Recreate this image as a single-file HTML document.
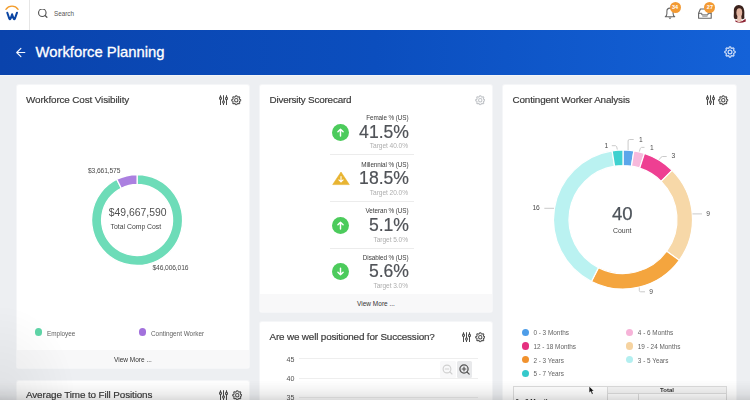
<!DOCTYPE html>
<html><head><meta charset="utf-8">
<style>
*{margin:0;padding:0;box-sizing:border-box}
html,body{width:750px;height:400px;overflow:hidden}
body{background:#edeff2;font-family:"Liberation Sans",sans-serif;position:relative;color:#333}
.a{position:absolute;white-space:nowrap}
.top{position:absolute;left:0;top:0;width:750px;height:30px;background:#fff}
.hdr{position:absolute;left:0;top:30px;width:750px;height:44.6px;background:linear-gradient(90deg,#0a43ac 0%,#0b4ebe 50%,#1462d8 100%)}
.card{position:absolute;background:#fff;border-radius:2px;overflow:hidden;box-shadow:0 0 0 1px rgba(255,255,255,0.45)}
.ttl{position:absolute;font-size:9.9px;letter-spacing:-0.12px;color:#3a3a3a;white-space:nowrap;line-height:12px;margin-top:-0.4px;-webkit-text-stroke:0.18px #3a3a3a}
.foot{position:absolute;left:0;right:0;bottom:0;height:18.2px;background:#f8f8f9;font-size:6.5px;color:#333;text-align:center;line-height:18px;padding-top:1.2px}
.lg{position:absolute;font-size:6.4px;color:#636363;white-space:nowrap;line-height:8px}
.dot{position:absolute;width:7.4px;height:7.4px;border-radius:50%}
.sm{position:absolute;font-size:6.7px;letter-spacing:-0.12px;margin-top:0.3px;color:#4a4a4a;white-space:nowrap;line-height:8px}
.lab{position:absolute;font-size:6.35px;letter-spacing:-0.08px;margin-top:0.2px;color:#3d3d3d;white-space:nowrap;line-height:8px;text-align:right}
.big{position:absolute;font-size:17.6px;color:#505358;-webkit-text-stroke:0.2px #505358;white-space:nowrap;line-height:20px;text-align:right}
.tgt{position:absolute;font-size:6.6px;letter-spacing:-0.06px;margin-top:1px;color:#aeaeae;white-space:nowrap;line-height:8px;text-align:right}
.sep{position:absolute;height:1px;background:#ececec}
.icn{position:absolute}
</style></head><body><div id="wrap" style="position:absolute;left:0;top:0;width:750px;height:400px;filter:blur(0.45px)">
<svg width="0" height="0" style="position:absolute">
  <defs>
    <symbol id="filt" viewBox="0 0 10 10">
      <g fill="none" stroke="#4a4a4a" stroke-width="1.05">
        <path d="M1.5 0.3V9.9M4.5 0.3V9.9M7.5 0.3V9.9"/>
      </g>
      <g fill="#4a4a4a">
        <ellipse cx="1.5" cy="3.2" rx="1.45" ry="1.9"/>
        <ellipse cx="4.5" cy="7" rx="1.45" ry="1.8"/>
        <ellipse cx="7.5" cy="3.4" rx="1.45" ry="1.9"/>
      </g>
      <g fill="#fff">
        <circle cx="1.5" cy="3.2" r="0.5"/>
        <circle cx="4.5" cy="7" r="0.5"/>
        <circle cx="7.5" cy="3.4" r="0.5"/>
      </g>
    </symbol>
    <symbol id="gear" viewBox="0 0 10 10">
      <path d="M4.52 0.12 L5.48 0.12 L6.10 1.36 L6.79 1.65 L8.11 1.21 L8.79 1.89 L8.35 3.21 L8.64 3.90 L9.88 4.52 L9.88 5.48 L8.64 6.10 L8.35 6.79 L8.79 8.11 L8.11 8.79 L6.79 8.35 L6.10 8.64 L5.48 9.88 L4.52 9.88 L3.90 8.64 L3.21 8.35 L1.89 8.79 L1.21 8.11 L1.65 6.79 L1.36 6.10 L0.12 5.48 L0.12 4.52 L1.36 3.90 L1.65 3.21 L1.21 1.89 L1.89 1.21 L3.21 1.65 L3.90 1.36Z" fill="none" stroke="currentColor" stroke-width="1.15" stroke-linejoin="round" transform="translate(0.55 0.55) scale(0.89)"/>
      <circle cx="5" cy="5" r="1.6" fill="none" stroke="currentColor" stroke-width="1"/>
    </symbol>
  </defs>
</svg>

<div class="top">
  <svg class="a" style="left:0;top:0" width="30" height="30" viewBox="0 0 30 30">
    <path d="M5.9 9.3 A7.5 7.5 0 0 1 18.1 9.3" fill="none" stroke="#f39c2a" stroke-width="1.4" stroke-linecap="round"/>
    <path d="M7.3 12.7 L9.3 18.6 Q9.9 20 10.6 18.6 L12.1 14.3 L13.6 18.6 Q14.3 20 14.9 18.6 L17 12.7" fill="none" stroke="#0b46a4" stroke-width="2" stroke-linejoin="round" stroke-linecap="round"/>
  </svg>
  <div class="a" style="left:28.5px;top:0;width:1.2px;height:30px;background:#e6e6e6"></div>
  <svg class="a" style="left:37px;top:9px" width="12" height="10" viewBox="0 0 12 10">
    <circle cx="5.3" cy="3.7" r="3.75" fill="none" stroke="#555" stroke-width="1.15"/>
    <path d="M8.1 6.5 L9.9 8.3" stroke="#555" stroke-width="1.25" stroke-linecap="round"/>
  </svg>
  <div class="a" style="left:54px;top:9.5px;font-size:6.3px;color:#555;line-height:8px">Search</div>
  <svg class="a" style="left:663px;top:6px" width="15" height="15" viewBox="0 0 15 15">
    <path d="M2.3 10.8 Q3.9 9.9 3.9 7.6 L3.9 5.2 A3.1 3.1 0 0 1 10.1 5.2 L10.1 7.6 Q10.1 9.9 11.7 10.8 Z" fill="none" stroke="#666" stroke-width="1.1" stroke-linejoin="round"/>
    <path d="M5.4 11.4 L8.6 11.4 L7 13.2 Z" fill="#666"/>
  </svg>
  <div class="a" style="left:669.6px;top:2.4px;width:11px;height:11px;border-radius:50%;background:#f39a33;color:#fff;font-size:5.5px;font-weight:bold;text-align:center;line-height:11px">34</div>
  <svg class="a" style="left:697px;top:7px" width="16" height="14" viewBox="0 0 16 14">
    <path d="M1.6 6.3 L3.4 2 L12.4 2 L14.2 6.3 V11.3 H1.6Z" fill="none" stroke="#666" stroke-width="1.1" stroke-linejoin="round"/>
    <path d="M1.6 6.3 H4.8 V7.9 H11 V6.3 H14.2" fill="none" stroke="#666" stroke-width="1"/>
    <rect x="5.3" y="8.4" width="5.2" height="1.5" fill="#aaa"/>
  </svg>
  <div class="a" style="left:704.4px;top:2.4px;width:11px;height:11px;border-radius:50%;background:#f39a33;color:#fff;font-size:5.5px;font-weight:bold;text-align:center;line-height:11px">27</div>
  <svg class="a" style="left:728px;top:2px" width="22" height="24" viewBox="0 0 22 24">
    <defs><filter id="bl" x="-20%" y="-20%" width="140%" height="140%"><feGaussianBlur stdDeviation="0.35"/></filter></defs>
    <g filter="url(#bl)">
    <path d="M10.8 3 C7.3 3.1 5.6 5.8 5.9 9.6 C6 12.6 5.3 14.9 6.2 16.6 C7.2 17.8 8.8 17.3 9.6 16.8 L12.8 16.8 C14.3 17.4 16.2 17.6 16.4 15.8 C16.1 13.4 16.6 11 16.2 8.5 C15.8 5.1 14.1 3 10.8 3Z" fill="#3a221c"/>
    <ellipse cx="11.3" cy="10.6" rx="2.9" ry="4.3" fill="#e2b4a0"/>
    <path d="M9.5 13.8 L13.3 13.8 L13.8 19.8 L8.9 19.8Z" fill="#e9c3b2"/>
    <path d="M7.6 18 Q9.5 19.8 11 20.2 Q14 19.8 17.6 16.8 L17.8 19.6 Q12 22 7.4 19.8Z" fill="#8d2233"/>
    </g>
  </svg>
</div>

<div class="a" style="left:0;top:74.6px;width:750px;height:1.6px;background:#f3f5f8"></div>
<div class="hdr">
  <svg class="a" style="left:15px;top:16.9px" width="11" height="11" viewBox="0 0 11 11"><path d="M9.8 5.5 L1.8 5.5 M5.9 1.3 L1.7 5.5 L5.9 9.7" fill="none" stroke="#f2f6ff" stroke-width="1.15" stroke-linecap="round" stroke-linejoin="round"/></svg>
  <div class="a" style="left:35.6px;top:13.4px;font-size:14.8px;color:#fff;line-height:18px;-webkit-text-stroke:0.3px #fff">Workforce Planning</div>
  <svg class="a" style="left:724.3px;top:15.5px;color:#dfe9fb;opacity:0.9" width="12" height="12"><use href="#gear" width="12" height="12"/></svg>
</div>

<!-- Card 1 -->
<div class="card" style="left:16.5px;top:85px;width:232.8px;height:282.8px">
  <div class="ttl" style="left:9.5px;top:9px">Workforce Cost Visibility</div>
  <svg class="icn" style="left:202.5px;top:10px" width="10" height="10"><use href="#filt" width="10" height="10"/></svg>
  <svg class="icn" style="left:214.5px;top:10px;color:#555" width="10.5" height="10.5"><use href="#gear" width="10.5" height="10.5"/></svg>
  <svg class="icn" style="left:0;top:0" width="232" height="282" viewBox="16.5 85 232 282">
    <g stroke="#fff" stroke-width="1.3">
      <path fill="#6ddcb8" d="M136.60 174.50A45.5 45.5 0 1 1 116.30 179.28L120.76 188.23A35.5 35.5 0 1 0 136.60 184.50Z"/>
      <path fill="#ab80e0" d="M116.30 179.28A45.5 45.5 0 0 1 136.60 174.50L136.60 184.50A35.5 35.5 0 0 0 120.76 188.23Z"/>
    </g>
  </svg>
  <div class="sm" style="left:71.5px;top:82px">$3,661,575</div>
  <div class="sm" style="left:136px;top:179px">$46,006,016</div>
  <div class="a" style="left:92.3px;top:121px;font-size:10.4px;color:#505050;line-height:14px">$49,667,590</div>
  <div class="a" style="left:94.1px;top:137px;font-size:6.85px;color:#444;line-height:9px">Total Comp Cost</div>
  <div class="dot" style="left:18.5px;top:243.4px;background:#5fd5a8"></div>
  <div class="lg" style="left:30.5px;top:244.6px">Employee</div>
  <div class="dot" style="left:122px;top:243.4px;background:#a271dc"></div>
  <div class="lg" style="left:134.5px;top:244.6px">Contingent Worker</div>
  <div class="foot">View More ...</div>
</div>

<!-- Card 2 -->
<div class="card" style="left:260px;top:85px;width:232px;height:227px">
  <div class="ttl" style="left:9.5px;top:9px;letter-spacing:-0.2px">Diversity Scorecard</div>
  <svg class="icn" style="left:214.5px;top:10.3px;color:#c2c5c9" width="10.5" height="10.5"><use href="#gear" width="10.5" height="10.5"/></svg>
  <!-- rows -->
  <div class="lab" style="right:83.5px;top:29px">Female % (US)</div>
  <div class="big" style="right:83px;top:36.6px">41.5%</div>
  <div class="tgt" style="right:84px;top:56px">Target 40.0%</div>
  <svg class="icn" style="left:71.5px;top:39px" width="17" height="17" viewBox="0 0 17 17"><circle cx="8.5" cy="8.5" r="8.5" fill="#4ccb5c"/><path d="M8.5 11.9V5.2M5.9 7.8 L8.5 5.2 L11.1 7.8" fill="none" stroke="#fff" stroke-width="1.45" stroke-linecap="round" stroke-linejoin="round"/></svg>
  <div class="sep" style="left:70px;top:69px;width:84px"></div>

  <div class="lab" style="right:83.5px;top:75.5px">Millennial % (US)</div>
  <div class="big" style="right:83px;top:83.1px">18.5%</div>
  <div class="tgt" style="right:84px;top:103px">Target 20.0%</div>
  <svg class="icn" style="left:71.5px;top:86.4px" width="18" height="15" viewBox="0 0 18 15"><path d="M9 1 L17.3 13.6 L0.7 13.6Z" fill="#e8b431" stroke="#e8b431" stroke-width="0.6" stroke-linejoin="round"/><path d="M9 5.6V10.9M6.9 8.8 L9 10.9 L11.1 8.8" fill="none" stroke="#fff" stroke-width="1.1" stroke-linecap="round" stroke-linejoin="round"/></svg>
  <div class="sep" style="left:70px;top:116px;width:84px"></div>

  <div class="lab" style="right:83.5px;top:122px">Veteran % (US)</div>
  <div class="big" style="right:83px;top:129.8px">5.1%</div>
  <div class="tgt" style="right:84px;top:149.5px">Target 5.0%</div>
  <svg class="icn" style="left:72px;top:132px" width="17" height="17" viewBox="0 0 17 17"><circle cx="8.5" cy="8.5" r="8.5" fill="#4ccb5c"/><path d="M8.5 11.9V5.2M5.9 7.8 L8.5 5.2 L11.1 7.8" fill="none" stroke="#fff" stroke-width="1.45" stroke-linecap="round" stroke-linejoin="round"/></svg>
  <div class="sep" style="left:70px;top:162.5px;width:84px"></div>

  <div class="lab" style="right:83.5px;top:168.5px">Disabled % (US)</div>
  <div class="big" style="right:83px;top:176.4px">5.6%</div>
  <div class="tgt" style="right:84px;top:196px">Target 3.0%</div>
  <svg class="icn" style="left:72px;top:178px" width="17" height="17" viewBox="0 0 17 17"><circle cx="8.5" cy="8.5" r="8.5" fill="#4ccb5c"/><path d="M8.5 5.1V11.8M5.9 9.2 L8.5 11.8 L11.1 9.2" fill="none" stroke="#fff" stroke-width="1.45" stroke-linecap="round" stroke-linejoin="round"/></svg>
  <div class="foot">View More ...</div>
</div>

<!-- Card 3 -->
<div class="card" style="left:260px;top:322px;width:232px;height:100px">
  <div class="ttl" style="left:9.5px;top:9px;letter-spacing:-0.16px">Are we well positioned for Succession?</div>
  <svg class="icn" style="left:202px;top:10px" width="10" height="10"><use href="#filt" width="10" height="10"/></svg>
  <svg class="icn" style="left:214.5px;top:10px;color:#555" width="10.5" height="10.5"><use href="#gear" width="10.5" height="10.5"/></svg>
  <div class="sm" style="left:26.6px;top:33.4px;font-size:7.1px;color:#505050">45</div>
  <div class="sm" style="left:26.6px;top:52.4px;font-size:7.1px;color:#505050">40</div>
  <div class="sm" style="left:26.6px;top:71.4px;font-size:7.1px;color:#505050">35</div>
  <div class="sep" style="left:39px;top:36.4px;width:179px;background:#eee"></div>
  <div class="sep" style="left:39px;top:56px;width:179px;background:#eee"></div>
  <div class="sep" style="left:39px;top:75px;width:179px;background:#eee"></div>
  <div class="a" style="left:179.5px;top:39.4px;width:16px;height:16.6px;background:#f8f8f9;border-radius:1.5px"></div>
  <svg class="icn" style="left:181px;top:41px" width="14" height="14" viewBox="0 0 14 14"><circle cx="6" cy="6" r="3.9" fill="none" stroke="#cfcfcf" stroke-width="1.1"/><path d="M8.9 8.9L11 11M4.3 6H7.7" stroke="#cfcfcf" stroke-width="1.1" stroke-linecap="round"/></svg>
  <div class="a" style="left:196.8px;top:39.4px;width:15.6px;height:16.6px;background:#e8e9eb;border-radius:1.5px"></div>
  <svg class="icn" style="left:198px;top:41px" width="14" height="14" viewBox="0 0 14 14"><circle cx="6" cy="6" r="4.1" fill="none" stroke="#555" stroke-width="1.3"/><path d="M9 9L11.2 11.2M4.2 6H7.8M6 4.2V7.8" stroke="#555" stroke-width="1.2" stroke-linecap="round"/></svg>
</div>

<!-- Card 4 -->
<div class="card" style="left:503px;top:85px;width:232.8px;height:330px">
  <div class="ttl" style="left:9.5px;top:9px;letter-spacing:-0.15px">Contingent Worker Analysis</div>
  <svg class="icn" style="left:203px;top:10px" width="10" height="10"><use href="#filt" width="10" height="10"/></svg>
  <svg class="icn" style="left:215px;top:10px;color:#555" width="10.5" height="10.5"><use href="#gear" width="10.5" height="10.5"/></svg>
  <svg class="icn" style="left:0;top:0" width="234" height="330" viewBox="503 85 234 330">
    <g stroke="#fff" stroke-width="1.2">
      <path fill="#5ba6ea" d="M623.00 150.00A69.5 69.5 0 0 1 633.87 150.86L631.45 166.16A54 54 0 0 0 623.00 165.50Z"/>
      <path fill="#f7b9dc" d="M633.87 150.86A69.5 69.5 0 0 1 644.48 153.40L639.69 168.14A54 54 0 0 0 631.45 166.16Z"/>
      <path fill="#ee3f92" d="M644.48 153.40A69.5 69.5 0 0 1 672.14 170.36L661.18 181.32A54 54 0 0 0 639.69 168.14Z"/>
      <path fill="#f7d8a8" d="M672.14 170.36A69.5 69.5 0 0 1 679.23 260.35L666.69 251.24A54 54 0 0 0 661.18 181.32Z"/>
      <path fill="#f4a53e" d="M679.23 260.35A69.5 69.5 0 0 1 591.45 281.42L598.48 267.61A54 54 0 0 0 666.69 251.24Z"/>
      <path fill="#baf2f1" d="M591.45 281.42A69.5 69.5 0 0 1 612.13 150.86L614.55 166.16A54 54 0 0 0 598.48 267.61Z"/>
      <path fill="#3fd1cf" d="M612.13 150.86A69.5 69.5 0 0 1 623.00 150.00L623.00 165.50A54 54 0 0 0 614.55 166.16Z"/>
    </g>
    <g fill="none" stroke="#c4c4c4" stroke-width="0.9">
      <path d="M611.8 145.7H615.5Q617 145.7 617.3 149.5"/>
      <path d="M628.1 150V141Q628.1 139.5 629.5 139.5H633.7"/>
      <path d="M639.4 151.5Q640 147.4 641.5 147.4H644.5"/>
      <path d="M659.2 159.7Q661 156.5 662.5 156.5H666.7"/>
      <path d="M544.3 208.3H554"/>
      <path d="M692.5 213.9H702"/>
      <path d="M639.3 287.5V290.5Q639.3 291.8 640.6 291.8H645"/>
    </g>
  </svg>
  <div class="sm" style="left:101.5px;top:56.5px">1</div>
  <div class="sm" style="left:136px;top:51px">1</div>
  <div class="sm" style="left:147px;top:58.5px">1</div>
  <div class="sm" style="left:168.5px;top:67px">3</div>
  <div class="sm" style="left:29.5px;top:118.5px">16</div>
  <div class="sm" style="left:203.2px;top:124.5px">9</div>
  <div class="sm" style="left:146.3px;top:203px">9</div>
  <div class="a" style="left:109px;top:118.5px;font-size:18.6px;color:#4d535a;line-height:20px;-webkit-text-stroke:0.25px #4d535a">40</div>
  <div class="a" style="left:110px;top:142px;font-size:6.9px;color:#444;line-height:8px">Count</div>

    <div class="dot" style="left:18.8px;top:243.5px;background:#4e9de8"></div>
  <div class="lg" style="left:30.4px;top:244.2px">0 - 3 Months</div>
  <div class="dot" style="left:122.8px;top:243.5px;background:#f6b3d8"></div>
  <div class="lg" style="left:134.8px;top:244.2px">4 - 6 Months</div>
  <div class="dot" style="left:18.8px;top:257.2px;background:#e5307f"></div>
  <div class="lg" style="left:30.4px;top:257.9px">12 - 18 Months</div>
  <div class="dot" style="left:122.8px;top:257.2px;background:#f6d3a0"></div>
  <div class="lg" style="left:134.8px;top:257.9px">19 - 24 Months</div>
  <div class="dot" style="left:18.8px;top:270.9px;background:#f1922e"></div>
  <div class="lg" style="left:30.4px;top:271.6px">2 - 3 Years</div>
  <div class="dot" style="left:122.8px;top:270.9px;background:#b3eff0"></div>
  <div class="lg" style="left:134.8px;top:271.6px">3 - 5 Years</div>
  <div class="dot" style="left:18.8px;top:284.6px;background:#35c9cb"></div>
  <div class="lg" style="left:30.4px;top:285.3px">5 - 7 Years</div>

  <!-- table -->
  <div class="a" style="left:9.7px;top:300.8px;width:214.2px;height:40px;border:1px solid #ddd;background:#fff"></div>
  <div class="a" style="left:104.2px;top:300.8px;width:119.7px;height:8.5px;border:1px solid #ddd;background:#f5f5f5"></div>
  <div class="a" style="left:104.2px;top:308.8px;width:1px;height:20px;background:#ddd"></div>
  <div class="a" style="left:134.8px;top:308.8px;width:1px;height:20px;background:#ddd"></div>
  <div class="a" style="left:104.2px;top:300.8px;width:119.7px;font-size:6px;font-weight:bold;color:#333;text-align:center;line-height:9px">Total</div>
  <div class="a" style="left:12.5px;top:312.9px;font-size:6.5px;font-weight:bold;color:#333;line-height:8px">0 - 3 Months</div>
</div>

<!-- Card 5 -->
<div class="card" style="left:16.5px;top:381px;width:232.5px;height:40px">
  <div class="ttl" style="left:9.5px;top:8px">Average Time to Fill Positions</div>
  <svg class="icn" style="left:202.5px;top:8.5px" width="10" height="10"><use href="#filt" width="10" height="10"/></svg>
  <svg class="icn" style="left:215px;top:8.5px;color:#555" width="10.5" height="10.5"><use href="#gear" width="10.5" height="10.5"/></svg>
</div>

<div class="a" style="left:0;top:380px;width:750px;height:20px;background:linear-gradient(to bottom,rgba(0,0,0,0) 0%,rgba(0,0,0,0.03) 40%,rgba(0,0,0,0.08) 75%,rgba(0,0,0,0.14) 100%)"></div>
<div class="a" style="left:0;top:250px;width:120px;height:150px;background:radial-gradient(ellipse at 0% 100%,rgba(0,0,0,0.06) 0%,rgba(0,0,0,0) 45%)"></div>
<!-- cursor -->
<svg class="a" style="left:588px;top:386px" width="8" height="10" viewBox="0 0 8 10"><path d="M1.2 0.4 L1.2 6.6 L2.7 5.4 L4 8.2 L5.1 7.7 L3.9 5 L5.8 4.9Z" fill="#111" stroke="#fff" stroke-width="0.3" stroke-linejoin="round"/></svg>

</div></body></html>
